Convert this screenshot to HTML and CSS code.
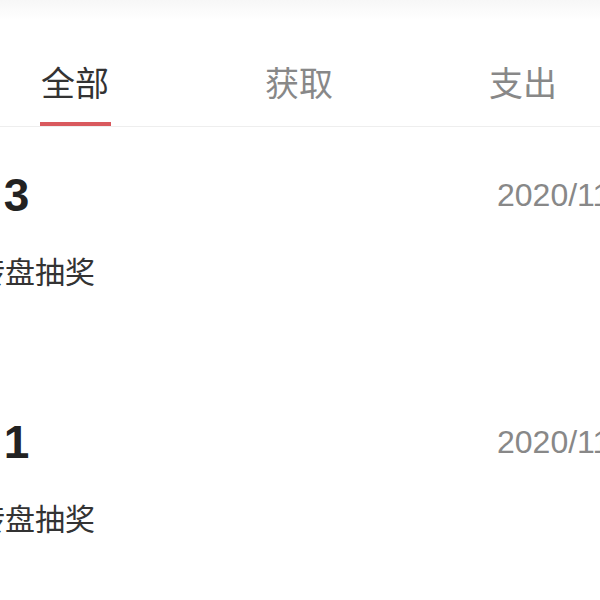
FILE: index.html
```html
<!DOCTYPE html>
<html lang="zh-CN">
<head>
    <meta charset="UTF-8">
    <meta name="viewport" content="width=device-width, initial-scale=1.0">
    <title>积分明细</title>
    <link rel="stylesheet" href="styles.css">
</head>
<body>

    <div class="top-band"></div>

    <div class="tabs">
        <div class="tab active"><span>全部</span></div>
        <div class="tab"><span>获取</span></div>
        <div class="tab"><span>支出</span></div>
    </div>

    <div class="record-list">
        <div class="record">
            <div class="record-row">
                <span class="amount">+3</span>
                <span class="date">2020/11/12 10:24</span>
            </div>
            <div class="desc">转盘抽奖</div>
        </div>
        <div class="record">
            <div class="record-row">
                <span class="amount">+1</span>
                <span class="date">2020/11/11 18:05</span>
            </div>
            <div class="desc">转盘抽奖</div>
        </div>
    </div>

</body>
</html>
```

FILE: styles.css
```css
/* General */
body {
    margin: 0;
    padding: 0;
    background: #fff;
    color: #333;
    font-family: "Liberation Sans", "Noto Sans CJK SC", sans-serif;
    overflow: hidden;
    height: 600px;
}

/* faint strip left from the nav bar */
.top-band {
    height: 20px;
    background: linear-gradient(#f7f7f7, #fff);
}

/* Tabs */
.tabs {
    display: flex;
    margin-left: -37px;
    width: 672px;
    border-bottom: 1px solid #eeeeee;
}
.tab {
    flex: 1;
    display: flex;
    flex-direction: column;
    align-items: center;
    padding-top: 42px;
    font-family: "Noto Sans CJK SC", sans-serif;
    font-size: 34px;
    line-height: 40px;
    color: #888;
}
.tab span {
    display: block;
    padding-bottom: 20px;
    border-bottom: 4px solid transparent;
    width: 71px;
    text-align: center;
}
.tab.active {
    color: #333;
}
.tab.active span {
    border-bottom-color: #d9595e;
}

/* Records */
.record-list {
    margin-left: -25px;
}
.record {
    padding: 41px 0 84px;
}
.record-row {
    display: grid;
    grid-template-columns: 522px auto;
    align-items: center;
    height: 50px;
}
.amount {
    font-size: 46px;
    font-weight: bold;
    color: #222;
    margin-left: -5px;
    letter-spacing: 7px;
}
.date {
    font-size: 32px;
    color: #888;
    white-space: nowrap;
}
.desc {
    margin-top: 32px;
    font-family: "Noto Sans CJK SC", sans-serif;
    font-size: 30px;
    line-height: 40px;
    color: #333;
}
```
